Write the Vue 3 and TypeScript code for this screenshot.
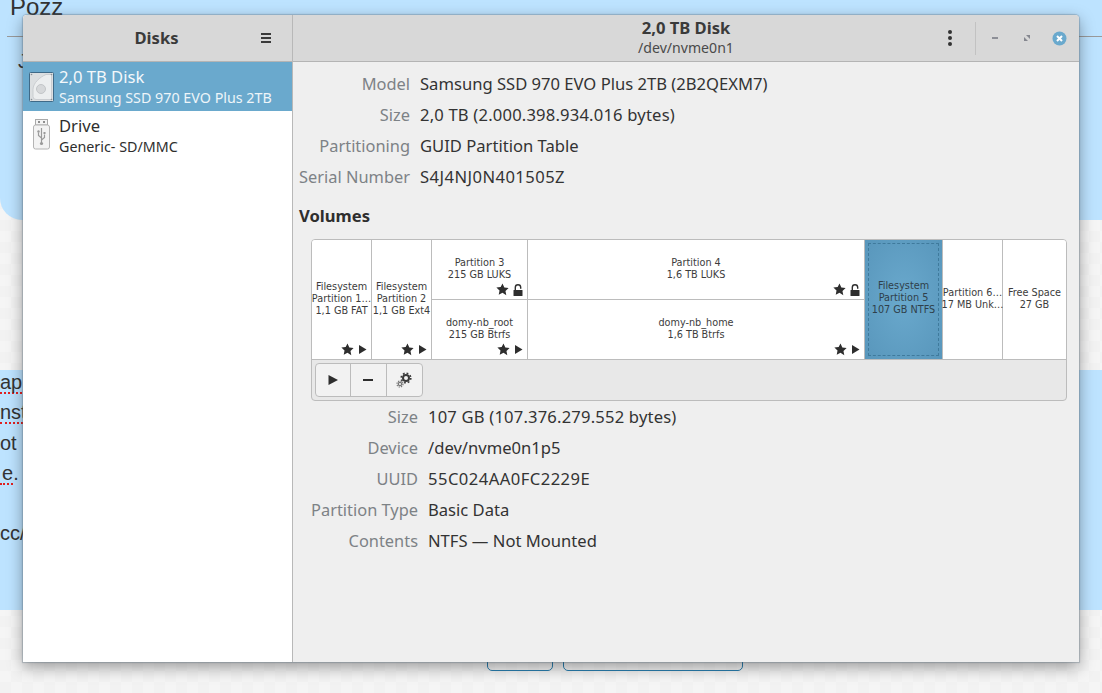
<script setup lang="ts">
interface Cell { lines: string[]; icon?: 'play' | 'lock' | 'none' }
interface Col { width: number; cells: Cell[]; selected?: boolean }

const columns: Col[] = [
  { width: 59, cells: [{ lines: ['Filesystem', 'Partition 1…', '1,1 GB FAT'], icon: 'play' }] },
  { width: 59, cells: [{ lines: ['Filesystem', 'Partition 2', '1,1 GB Ext4'], icon: 'play' }] },
  { width: 95, cells: [
    { lines: ['Partition 3', '215 GB LUKS'], icon: 'lock' },
    { lines: ['domy-nb_root', '215 GB Btrfs'], icon: 'play' }
  ] },
  { width: 336, cells: [
    { lines: ['Partition 4', '1,6 TB LUKS'], icon: 'lock' },
    { lines: ['domy-nb_home', '1,6 TB Btrfs'], icon: 'play' }
  ] },
  { width: 77, selected: true, cells: [{ lines: ['Filesystem', 'Partition 5', '107 GB NTFS'], icon: 'none' }] },
  { width: 59, cells: [{ lines: ['Partition 6…', '17 MB Unk…'], icon: 'none' }] },
  { width: 63, cells: [{ lines: ['Free Space', '27 GB'], icon: 'none' }] }
]
const diskInfo = [
  { k: 'Model', v: 'Samsung SSD 970 EVO Plus 2TB (2B2QEXM7)', c: '' },
  { k: 'Size', v: '2,0 TB (2.000.398.934.016 bytes)', c: 'mid' },
  { k: 'Partitioning', v: 'GUID Partition Table', c: '' },
  { k: 'Serial Number', v: 'S4J4NJ0N401505Z', c: 'wide' }
]
const volInfo = [
  { k: 'Size', v: '107 GB (107.376.279.552 bytes)', c: 'mid' },
  { k: 'Device', v: '/dev/nvme0n1p5', c: '' },
  { k: 'UUID', v: '55C024AA0FC2229E', c: 'wide' },
  { k: 'Partition Type', v: 'Basic Data', c: '' },
  { k: 'Contents', v: 'NTFS — Not Mounted', c: '' }
]
</script>

<template>
  <div class="desktop">
    <div class="page">
      <section class="hero">
        <div class="pozz">Pozz</div>
        <hr class="rule" />
        <div class="sub">J</div>
      </section>
      <section class="note">
        <div class="line first"><span class="sq">ap</span></div>
        <div class="line"><span class="sq">nst</span></div>
        <div class="line">ot</div>
        <div class="line"><span class="sq pad">e</span>.</div>
        <div class="line">&nbsp;</div>
        <div class="line">cc/</div>
      </section>
      <div class="buttons">
        <span class="pbtn a"></span>
        <span class="pbtn b"></span>
      </div>
    </div>

    <div class="window">
      <aside class="side">
        <header class="shead">
          <span class="stitle">Disks</span>
          <svg class="burger" width="10" height="10" viewBox="0 0 10 10"><path d="M0 0h10v2H0zM0 4h10v2H0zM0 8h10v2H0z" fill="#3a3a3a" /></svg>
        </header>
        <div class="drive sel">
          <svg class="dicon" width="26" height="32" viewBox="0 0 26 32">
            <rect x="0.5" y="1.500" width="24" height="29" rx="1" fill="#dcdfe1" stroke="#3f6a88" />
            <path d="M22.500 3.500 H17 C11 6 4 12 4 18.500 V25.500 Q4 28.500 7 28.500 H22.500Z" fill="#eceeef" stroke="#c3c7ca" stroke-width="0.8" />
            <circle cx="12" cy="18" r="4.500" fill="#d6d8da" stroke="#c2c5c8" />
            <circle cx="2.500" cy="3.500" r=".8" fill="#8a9096" /><circle cx="22.500" cy="3.500" r=".8" fill="#8a9096" />
            <circle cx="2.500" cy="28.500" r=".8" fill="#8a9096" /><circle cx="22.500" cy="28.500" r=".8" fill="#8a9096" />
          </svg>
          <div class="dtext"><div class="dname">2,0 TB Disk</div><div class="dsub">Samsung SSD 970 EVO Plus 2TB</div></div>
        </div>
        <div class="drive">
          <svg class="dicon" width="26" height="33" viewBox="0 0 26 33">
            <rect x="6.500" y="0.500" width="12" height="5.500" fill="#f4f4f4" stroke="#a9a9a9" />
            <rect x="9" y="2" width="2" height="2" fill="#8e8e8e" /><rect x="14" y="2" width="2" height="2" fill="#8e8e8e" />
            <rect x="4.500" y="6" width="16" height="24" rx="2" fill="#f3f3f3" stroke="#b4b4b4" />
            <path d="M12.500 9v15M12.500 19l-3-2.500v-3M12.500 21l3-2.500v-3" fill="none" stroke="#9a9a9a" stroke-width="1.200" />
            <circle cx="12.500" cy="24.500" r="1.600" fill="#9a9a9a" /><circle cx="9.500" cy="12.500" r="1.200" fill="#9a9a9a" /><rect x="14.500" y="13" width="2" height="2" fill="#9a9a9a" />
          </svg>
          <div class="dtext"><div class="dname dark">Drive</div><div class="dsub dark">Generic- SD/MMC</div></div>
        </div>
      </aside>

      <main class="main">
        <header class="mhead">
          <div class="mtitle"><div class="t1">2,0 TB Disk</div><div class="t2">/dev/nvme0n1</div></div>
          <svg class="kebab" width="6" height="18" viewBox="0 0 6 18"><circle cx="3" cy="3" r="2" fill="#333" /><circle cx="3" cy="9" r="2" fill="#333" /><circle cx="3" cy="15" r="2" fill="#333" /></svg>
          <span class="vsep"></span>
          <span class="ctl"><svg width="8" height="4" viewBox="0 0 8 4"><rect x="1" y="1" width="6" height="2" fill="#8d8f97" /></svg></span>
          <span class="ctl"><svg width="8" height="8" viewBox="0 0 8 8"><path d="M3 1h4v4zM1 3v4h4z" fill="#85878f" /></svg></span>
          <span class="ctl"><svg width="15" height="15" viewBox="0 0 15 15"><circle cx="7.500" cy="7.500" r="7" fill="#6aa9cd" /><path d="M5 5l5 5M10 5l-5 5" stroke="#fff" stroke-width="2" /></svg></span>
        </header>

        <div class="content">
          <dl class="info top">
            <template v-for="r in diskInfo" :key="r.k"><dt>{{ r.k }}</dt><dd :class="r.c">{{ r.v }}</dd></template>
          </dl>
          <h2 class="vol">Volumes</h2>
          <div class="grid">
            <div class="cols">
              <div v-for="(c, i) in columns" :key="i" class="col" :class="{ picked: c.selected }" :style="{ width: c.width + 'px' }">
                <div v-for="(cell, j) in c.cells" :key="j" class="cell" :class="{ dashed: c.selected }">
                  <div class="ctext"><div v-for="l in cell.lines" :key="l">{{ l }}</div></div>
                  <div v-if="cell.icon !== 'none'" class="badges">
                    <svg width="13" height="13" viewBox="0 0 24 24"><path d="M12 1l3.400 7.300 7.900 1-5.800 5.500 1.500 7.900L12 18l-7 3.700 1.500-7.900L.7 8.300l7.900-1z" fill="#2e2e2e" /></svg>
                    <svg v-if="cell.icon === 'play'" width="9" height="11" viewBox="0 0 9 11"><path d="M1 1l7.500 4.500L1 10z" fill="#2e2e2e" /></svg>
                    <svg v-else width="10" height="12" viewBox="0 0 10 12"><path d="M2.300 6.500V3.400a2.700 2.700 0 0 1 5.400 0v1.300" fill="none" stroke="#2e2e2e" stroke-width="1.400" /><rect x="0.500" y="6" width="9" height="6" rx=".5" fill="#2e2e2e" /></svg>
                  </div>
                </div>
              </div>
            </div>
            <div class="tools">
              <div class="tgroup">
                <button class="tb"><svg width="12" height="12" viewBox="0 0 12 12"><path d="M1.500 1l9.500 5-9.500 5z" fill="#2e2e2e" /></svg></button>
                <button class="tb"><svg width="12" height="12" viewBox="0 0 12 12"><rect x="1" y="5" width="10" height="2" fill="#2e2e2e" /></svg></button>
                <button class="tb"><svg width="16" height="16" viewBox="0 0 16 16">
                  <circle cx="10" cy="6" r="3" fill="none" stroke="#3a3a3a" stroke-width="2" />
                  <circle cx="10" cy="6" r="4.800" fill="none" stroke="#3a3a3a" stroke-width="1.600" stroke-dasharray="1.800 1.970" />
                  <circle cx="4" cy="12" r="1.700" fill="none" stroke="#777" stroke-width="1.200" />
                  <circle cx="4" cy="12" r="3" fill="none" stroke="#777" stroke-width="1.200" stroke-dasharray="1.300 1.050" />
                </svg></button>
              </div>
            </div>
          </div>
          <dl class="info bottom">
            <template v-for="r in volInfo" :key="r.k"><dt>{{ r.k }}</dt><dd :class="r.c">{{ r.v }}</dd></template>
          </dl>
        </div>
      </main>
    </div>
  </div>
</template>

<style>
html, body { margin: 0; padding: 0; overflow: hidden; }
</style>

<style scoped>
.desktop { position: relative; width: 1102px; height: 693px; overflow: hidden; background: repeating-conic-gradient(#f5f5f5 0 25%, #f2f2f2 0 50%) 0 0 / 22px 22px; font-family: "Noto Sans", sans-serif; }
.page { height: 693px; font-family: "Liberation Sans", Arial, sans-serif; color: #333; }
.hero { height: 220px; box-sizing: border-box; background: #bde3ff; border-bottom-left-radius: 22px; margin-right: -40px; padding: 0 0 0 10px; overflow: hidden; }
.pozz { font-size: 24px; line-height: 28px; margin-top: -7px; }
.rule { border: 0; border-top: 1px solid #9a9a9a; margin: 15px 0 0 -3px; }
.sub { font-size: 20px; line-height: 24px; margin: 12px 0 0 8px; }
.note { height: 240px; margin-top: 150px; background: #bde3ff; box-sizing: border-box; overflow: hidden; }
.line { font-size: 20px; line-height: 30.300px; height: 30.300px; white-space: nowrap; }
.first { margin-top: -3px; }
.sq { display: inline-block; line-height: 19px; border-bottom: 2px dotted #e02020; }
.pad { padding-left: 2px; }
.buttons { display: flex; gap: 10px; margin: 40px 0 0 487px; }
.pbtn { display: block; height: 21px; box-sizing: border-box; border: 1px solid #2a7fb0; border-radius: 5px; }
.pbtn.a { width: 66px; }
.pbtn.b { width: 180px; }

.window { position: absolute; left: 23px; top: 15px; width: 1056px; height: 647px; display: flex; background: #efefef; border-radius: 4px 4px 0 0; overflow: hidden; box-shadow: 0 0 1px 1px rgba(90, 110, 125, .35), 0 5px 16px rgba(0, 0, 0, .38); color: #333; }
.side { width: 270px; flex: none; background: #fff; border-right: 1px solid #b8b8b8; box-sizing: border-box; }
.shead { height: 47px; box-sizing: border-box; background: #d8d8d8; border-bottom: 1px solid #b4b4b4; display: flex; align-items: center; justify-content: center; position: relative; }
.stitle { font-weight: 700; font-size: 16.600px; color: #3a3a3a; margin: 0 2px 2px 0; }
.burger { position: absolute; left: 238px; top: 18px; }
.drive { height: 49px; display: flex; align-items: center; padding-left: 6px; color: #fff; }
.drive.sel { background: #6aa9cd; }
.dicon { flex: none; margin-right: 4px; }
.dtext { min-width: 0; }
.dname { font-size: 16.600px; line-height: 20px; color: #f4f8fb; white-space: nowrap; }
.dsub { font-size: 14.300px; line-height: 19px; color: #eef5f9; white-space: nowrap; margin-top: 1px; }
.dark { color: #2e2e2e; }

.main { flex: 1; min-width: 0; display: flex; flex-direction: column; }
.mhead { height: 47px; flex: none; box-sizing: border-box; background: #d8d8d8; border-bottom: 1px solid #b4b4b4; display: flex; align-items: center; position: relative; }
.mtitle { position: absolute; left: 0; width: 786px; text-align: center; top: 2px; }
.t1 { font-weight: 700; font-size: 16.600px; line-height: 22px; color: #3a3a3a; }
.t2 { font-size: 14.100px; line-height: 18px; color: #4a4a4a; }
.kebab { margin-left: 654px; flex: none; }
.vsep { width: 1px; height: 33px; background: #c2c2c2; margin-left: 22px; flex: none; }
.ctl { width: 32px; display: flex; justify-content: center; align-items: center; flex: none; }
.vsep + .ctl { margin-left: 3px; }

.content { padding: 6px 12px 0 6px; }
.info { margin: 0; display: grid; font-size: 16.600px; line-height: 31px; column-gap: 10px; }
.info dt { text-align: right; color: #7d8286; white-space: nowrap; font-size: 16.400px; }
.info dd { margin: 0; color: #333; white-space: nowrap; }
.info dd.mid { letter-spacing: 0.18px; }
.info dd.wide { letter-spacing: 0.45px; }
.info.top { grid-template-columns: 111px 1fr; }
.info.bottom { grid-template-columns: 119px 1fr; margin-top: 0; }
.vol { font-size: 16.600px; font-weight: 700; line-height: 22px; margin: 13px 0 0; color: #2e2e2e; }
.grid { width: 756px; margin: 12px 0 0 12px; box-sizing: border-box; border: 1px solid #bcbcbc; border-radius: 4px; background: #e8e8e8; overflow: hidden; }
.cols { display: flex; height: 119px; border-bottom: 1px solid #bcbcbc; background: #fff; }
.col { flex: none; display: flex; flex-direction: column; border-right: 1px solid #bcbcbc; font-family: "DejaVu Sans", sans-serif; font-size: 9.700px; line-height: 12px; color: #3c3c3c; text-align: center; }
.col:last-child { border-right: 0; flex: 1; }
.cell { flex: 1; position: relative; display: flex; align-items: center; justify-content: center; white-space: nowrap; box-sizing: border-box; padding-bottom: 2px; }
.cell + .cell { border-top: 1px solid #bcbcbc; }
.badges { position: absolute; right: 4px; bottom: 3px; display: flex; align-items: center; gap: 4px; height: 13px; }
.picked { background: radial-gradient(ellipse at center, #6aa9cd 0%, #5896bb 100%); color: #2f3f4a; }
.dashed { margin: 3px; border: 1px dashed #3f7a9c; padding-bottom: 4px; }
.tools { height: 40px; display: flex; align-items: center; padding-left: 3px; }
.tgroup { display: flex; border: 1px solid #bcbcbc; border-radius: 4px; background: #f2f2f2; overflow: hidden; height: 34px; box-sizing: border-box; }
.tb { width: 35.300px; box-sizing: border-box; padding: 0; border: 0; border-right: 1px solid #bcbcbc; background: transparent; display: flex; align-items: center; justify-content: center; }
.tb:last-child { border-right: 0; }
</style>
